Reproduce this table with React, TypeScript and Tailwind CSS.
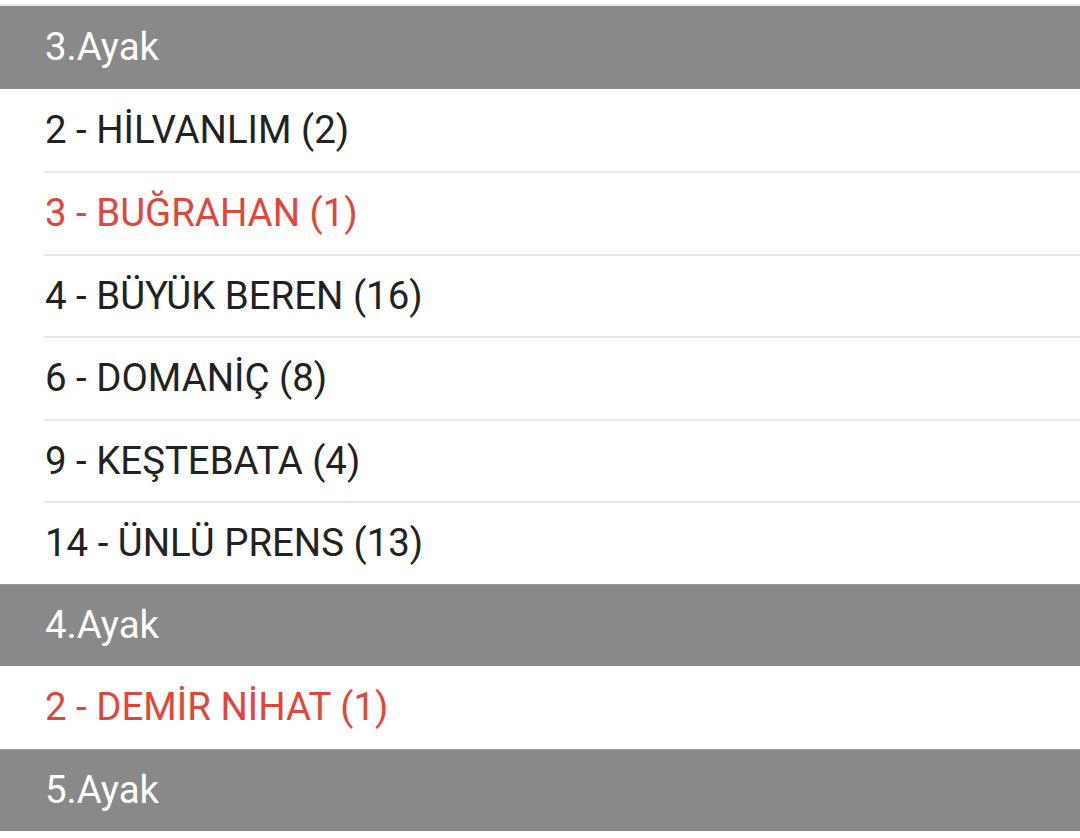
import React from 'react'

type Row = { label: string; red?: boolean }
type Group = { title: string; rows: Row[] }

// Race legs with horses
const GROUPS: Group[] = [
  {
    title: '3.Ayak',
    rows: [
      { label: '2 - HİLVANLIM (2)' },
      { label: '3 - BUĞRAHAN (1)', red: true },
      { label: '4 - BÜYÜK BEREN (16)' },
      { label: '6 - DOMANİÇ (8)' },
      { label: '9 - KEŞTEBATA (4)' },
      { label: '14 - ÜNLÜ PRENS (13)' },
    ],
  },
  {
    title: '4.Ayak',
    rows: [{ label: '2 - DEMİR NİHAT (1)', red: true }],
  },
  { title: '5.Ayak', rows: [] },
]

const App: React.FC = () => {
  return (
    <div
      className="min-h-screen bg-white pt-[4px]"
      style={{ fontFamily: 'Roboto, "Noto Sans", sans-serif' }}
    >
      <div className="border-t-2 border-[#e8e8e8]">
        {GROUPS.map((group, gi) => (
          <div key={group.title}>
            <div
              className={`flex h-[82.5px] items-center bg-[#898989] pl-[45px] text-[38.4px] text-white ${
                gi > 0 ? 'border-t border-[#9a9a9a]' : ''
              }`}
            >
              {group.title}
            </div>
            {group.rows.map((row, ri) => (
              <div key={row.label} className="h-[82.5px] pl-[44px]">
                <div
                  className={`flex h-full items-center pl-px text-[38.4px] ${
                    ri > 0 ? 'border-t-2 border-[#e6e6e6]' : ''
                  } ${row.red ? 'text-[#e0463a]' : 'text-[#222222]'}`}
                >
                  {row.label}
                </div>
              </div>
            ))}
          </div>
        ))}
      </div>
    </div>
  )
}

export default App
